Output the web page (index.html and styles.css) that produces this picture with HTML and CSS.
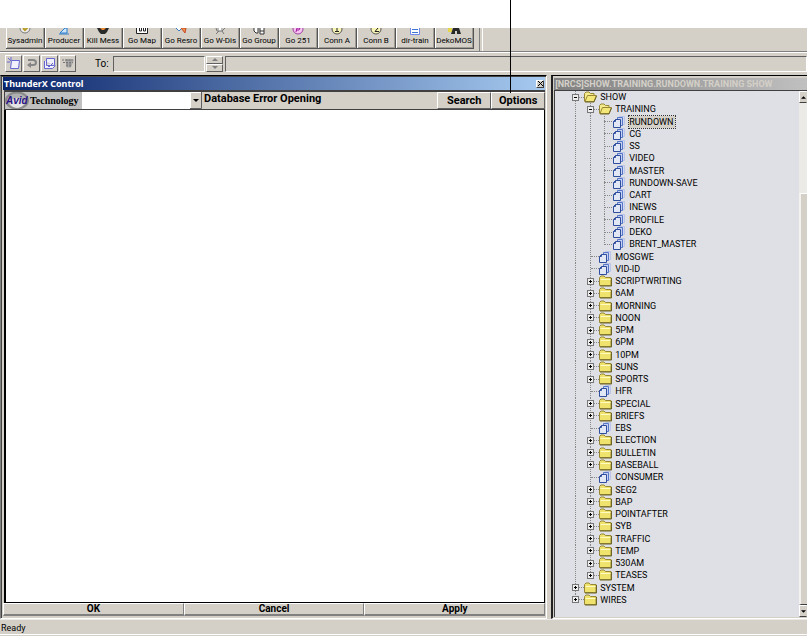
FILE: index.html
```html
<!DOCTYPE html>
<html lang="en">
<head>
<meta charset="utf-8">
<title>ThunderX Control</title>
<link rel="stylesheet" href="styles.css">
</head>
<body>
<svg class="defs" aria-hidden="true">
  <symbol id="folder" viewBox="0 0 13 12">
    <path d="M.5 10.500V2.500L2 1h3l1.500 1.500H12v8z" fill="#efe36e" stroke="#978734"/>
    <path d="M1.500 4.500h10" stroke="#fffbc2"/>
    <path d="M12.500 3v8H1" fill="none" stroke="#6e6428"/>
  </symbol>
  <symbol id="open" viewBox="0 0 13 12">
    <path d="M.5 10.500v-8L2 1h3l1.500 1.500H10v2" fill="#f5eb8c" stroke="#978734"/>
    <path d="M1 10.500l2.500-6h9l-2.500 6z" fill="#f3e77a" stroke="#978734"/>
    <path d="M1 11h9l2.500-6" fill="none" stroke="#6e6428"/>
  </symbol>
  <symbol id="queue" viewBox="0 0 13 12">
    <path d="M6.500 .5h5v8h-5z" fill="#d3daf1" stroke="#bac4e8"/>
    <path d="M4.500 1.500h5v8h-5z" fill="#c5d0f2" stroke="#5676c6"/>
    <path d="M2.500 3.500h5v8h-7v-6z" fill="#e2e7f6" stroke="#2f4e9e"/>
    <path d="M.5 5.500h2v-2" fill="none" stroke="#2f4e9e"/>
  </symbol>
</svg>

<div class="callout"></div>

<div class="app">
  <nav class="macros" aria-label="Macros">
    <button><svg viewBox="0 0 14 7"><circle cx="7" cy="0" r="5" fill="#eee" stroke="#777"/><path d="M5 0l2 2 3-3" fill="none" stroke="#b79b22" stroke-width="2"/></svg>Sysadmin</button>
    <button><svg viewBox="0 0 14 7"><path d="M3 5l5-5h2v5z" fill="#cbe6fb" stroke="#2b7dcc"/><path d="M2 6h10" stroke="#2b7dcc"/></svg>Producer</button>
    <button><svg viewBox="0 0 14 7"><path d="M1 0h12l-2 4-2 2H5L3 4z" fill="#292929"/><path d="M4 0h6L8 2H6z" fill="#e68a35"/></svg>Kill Mess</button>
    <button><svg viewBox="0 0 14 7"><path d="M1.500 0v5.500h11V0M4.500 0v3h2V0m2 0v3h2V0" fill="#fff" stroke="#222"/></svg>Go Map</button>
    <button><svg viewBox="0 0 14 7"><path d="M2 0l3 3 3-3" fill="#fff" stroke="#3a79c4"/><path d="M7 0l4 5 1-5z" fill="#ef9042" stroke="#c54a2b"/></svg>Go Resro</button>
    <button><svg viewBox="0 0 14 7"><path d="M3 0l1 3h5l3-3M6 3L3 6m6-3l2 3" fill="none" stroke="#777"/><circle cx="7" cy="1" r="2" fill="#fff" stroke="#999"/></svg>Go W-Dis</button>
    <button><svg viewBox="0 0 14 7"><path d="M2 0v3l2 2h2V0m2 0v6h4V0M8 3h4" fill="#fff" stroke="#333"/></svg>Go Group</button>
    <button><svg viewBox="0 0 14 7"><circle cx="7" cy="1" r="5" fill="#f7c3f1" stroke="#a044a0"/><path d="M5 4l1-4h3L8 2H5" fill="none" stroke="#a01ca0"/></svg>Go 251</button>
    <button><svg viewBox="0 0 14 7"><circle cx="7" cy="1" r="5" fill="#f8f5b5" stroke="#555"/><path d="M7 0v3M5 3.500h4" stroke="#222"/></svg>Conn A</button>
    <button><svg viewBox="0 0 14 7"><circle cx="7" cy="1" r="5" fill="#f8f5b5" stroke="#555"/><path d="M9 0L6 3.500h4" fill="none" stroke="#222"/></svg>Conn B</button>
    <button><svg viewBox="0 0 14 7"><path d="M2.500 0v6.500h9V0" fill="#fff" stroke="#7188e8"/><path d="M4 1.500h6M4 4.500h6" stroke="#3e75d4"/></svg>dir-train</button>
    <button><svg viewBox="0 0 14 7"><path d="M1 0h4v4H1z" fill="#e5d749"/><path d="M4 6l2-6h6l2 6h-4V3H8v3z" fill="#282828"/></svg>DekoMOS</button>
  </nav>

  <form class="messages">
    <div class="tools">
      <button type="button" aria-label="New message"><svg viewBox="0 0 14 13"><path d="M4.500 3.500h8l-1 8h-8zM1 1l3 3M4 0v3M0 5h3" fill="#f0f0ff" stroke="#6667cf"/></svg></button>
      <button type="button" aria-label="Reply"><svg viewBox="0 0 14 13"><path d="M3 3h5q3 0 3 2.500T8 8H5" fill="none" stroke="#858585" stroke-width="2"/><path d="M6 5v6L2 8z" fill="#858585"/></svg></button>
      <button type="button" aria-label="Forward"><svg viewBox="0 0 14 13"><path d="M3.500 1.500h8v7h-8zM1.500 4v7.500h8l3-3M4 8l2 2 4-4" fill="#f0f0ff" stroke="#6667cf"/></svg></button>
      <button type="button" aria-label="Send"><svg viewBox="0 0 14 13"><path d="M4 2.500h9L10 10.500H6z" fill="#aaa"/><path d="M1 3h12M2 5.500h10M5 8h6M6 2v8m3-8v8" stroke="#777" stroke-dasharray="2 1"/></svg></button>
    </div>
    <label for="to">To:</label>
    <input id="to" type="text">
    <div class="spin">
      <button type="button" aria-label="Previous"><svg viewBox="0 0 6 3"><path d="M0 3l3-3 3 3z" fill="#808080"/></svg></button>
      <button type="button" aria-label="Next"><svg viewBox="0 0 6 3"><path d="M0 0l3 3 3-3z" fill="#808080"/></svg></button>
    </div>
    <input class="body" type="text" aria-label="Message">
  </form>

  <main>
    <section class="control">
      <header>
        <h1>ThunderX Control</h1>
        <button aria-label="Close"><svg viewBox="0 0 5 5"><path d="M0 0l5 5M5 0L0 5" stroke="#000"/></svg></button>
      </header>
      <div class="search">
        <div class="brand">
          <svg viewBox="0 0 24 17"><ellipse cx="12" cy="8.500" rx="11" ry="8" fill="#b0b0b0" stroke="#8a8a8a" stroke-width="2"/><ellipse cx="12" cy="11" rx="7" ry="5" fill="#e4e4e4"/></svg>
          <em>Avid</em>
          <strong>Technology</strong>
        </div>
        <div class="combo">
          <select aria-label="Database"><option></option></select>
          <svg viewBox="0 0 12 17"><path d="M.5 16V.5H11" fill="none" stroke="#fff"/><path d="M0 16.500h11.500V0" fill="none" stroke="#606060"/><path d="M3 7h6l-3 3z"/></svg>
        </div>
        <output>Database Error Opening</output>
        <button>Search</button>
        <button>Options</button>
      </div>
      <div class="results"></div>
      <footer><button>OK</button><button>Cancel</button><button>Apply</button></footer>
    </section>

    <section class="directory">
      <h2>[NRCS]SHOW.TRAINING.RUNDOWN.TRAINING SHOW</h2>
      <div class="pane">
        <ul class="tree">
          <li class="top"><b class="minus"></b><svg><use href="#open"/></svg>SHOW</li>
          <li class="sub"><b class="minus"></b><svg><use href="#open"/></svg>TRAINING</li>
          <li class="leaf"><b></b><svg><use href="#queue"/></svg><mark>RUNDOWN</mark></li>
          <li class="leaf"><b></b><svg><use href="#queue"/></svg>CG</li>
          <li class="leaf"><b></b><svg><use href="#queue"/></svg>SS</li>
          <li class="leaf"><b></b><svg><use href="#queue"/></svg>VIDEO</li>
          <li class="leaf"><b></b><svg><use href="#queue"/></svg>MASTER</li>
          <li class="leaf"><b></b><svg><use href="#queue"/></svg>RUNDOWN-SAVE</li>
          <li class="leaf"><b></b><svg><use href="#queue"/></svg>CART</li>
          <li class="leaf"><b></b><svg><use href="#queue"/></svg>INEWS</li>
          <li class="leaf"><b></b><svg><use href="#queue"/></svg>PROFILE</li>
          <li class="leaf"><b></b><svg><use href="#queue"/></svg>DEKO</li>
          <li class="leaf end"><b></b><svg><use href="#queue"/></svg>BRENT_MASTER</li>
          <li class="sub"><b></b><svg><use href="#queue"/></svg>MOSGWE</li>
          <li class="sub"><b></b><svg><use href="#queue"/></svg>VID-ID</li>
          <li class="sub"><b class="plus"></b><svg><use href="#folder"/></svg>SCRIPTWRITING</li>
          <li class="sub"><b class="plus"></b><svg><use href="#folder"/></svg>6AM</li>
          <li class="sub"><b class="plus"></b><svg><use href="#folder"/></svg>MORNING</li>
          <li class="sub"><b class="plus"></b><svg><use href="#folder"/></svg>NOON</li>
          <li class="sub"><b class="plus"></b><svg><use href="#folder"/></svg>5PM</li>
          <li class="sub"><b class="plus"></b><svg><use href="#folder"/></svg>6PM</li>
          <li class="sub"><b class="plus"></b><svg><use href="#folder"/></svg>10PM</li>
          <li class="sub"><b class="plus"></b><svg><use href="#folder"/></svg>SUNS</li>
          <li class="sub"><b class="plus"></b><svg><use href="#folder"/></svg>SPORTS</li>
          <li class="sub"><b></b><svg><use href="#queue"/></svg>HFR</li>
          <li class="sub"><b class="plus"></b><svg><use href="#folder"/></svg>SPECIAL</li>
          <li class="sub"><b class="plus"></b><svg><use href="#folder"/></svg>BRIEFS</li>
          <li class="sub"><b></b><svg><use href="#queue"/></svg>EBS</li>
          <li class="sub"><b class="plus"></b><svg><use href="#folder"/></svg>ELECTION</li>
          <li class="sub"><b class="plus"></b><svg><use href="#folder"/></svg>BULLETIN</li>
          <li class="sub"><b class="plus"></b><svg><use href="#folder"/></svg>BASEBALL</li>
          <li class="sub"><b></b><svg><use href="#queue"/></svg>CONSUMER</li>
          <li class="sub"><b class="plus"></b><svg><use href="#folder"/></svg>SEG2</li>
          <li class="sub"><b class="plus"></b><svg><use href="#folder"/></svg>BAP</li>
          <li class="sub"><b class="plus"></b><svg><use href="#folder"/></svg>POINTAFTER</li>
          <li class="sub"><b class="plus"></b><svg><use href="#folder"/></svg>SYB</li>
          <li class="sub"><b class="plus"></b><svg><use href="#folder"/></svg>TRAFFIC</li>
          <li class="sub"><b class="plus"></b><svg><use href="#folder"/></svg>TEMP</li>
          <li class="sub"><b class="plus"></b><svg><use href="#folder"/></svg>530AM</li>
          <li class="sub end"><b class="plus"></b><svg><use href="#folder"/></svg>TEASES</li>
          <li class="top"><b class="plus"></b><svg><use href="#folder"/></svg>SYSTEM</li>
          <li class="top end"><b class="plus"></b><svg><use href="#folder"/></svg>WIRES</li>
        </ul>
        <div class="scroll">
          <button aria-label="Scroll up"><svg viewBox="0 0 6 3"><path d="M0 3l3-3 3 3z"/></svg></button>
          <div class="track"></div>
          <div class="thumb"></div>
          <button aria-label="Scroll down"><svg viewBox="0 0 6 3"><path d="M0 0l3 3 3-3z"/></svg></button>
        </div>
      </div>
    </section>
  </main>

  <div class="status">Ready</div>
</div>
</body>
</html>
```

FILE: styles.css
```css
* { box-sizing: border-box; }

body {
  margin: 0;
  height: 100vh;
  background: #fff;
  color: #000;
  font-family: Roboto, "Liberation Sans", sans-serif;
  font-size: 8px;
}

button, input, select {
  margin: 0;
  padding: 0;
  border: 0;
  border-radius: 0;
  color: inherit;
  font: inherit;
  background: #d4d0c8;
}

svg { display: block; flex: none; }
.defs { position: absolute; width: 0; height: 0; }

.callout {
  position: absolute;
  top: 0;
  left: 510px;
  width: 1px;
  height: 93px;
  background: #000;
}

.app {
  display: flex;
  flex-direction: column;
  height: 100%;
  padding: 28px 1px 1px 0;
}

/* Macro buttons */
.macros {
  display: flex;
  flex: none;
  height: 24px;
  padding: 0 0 3px 6px;
  background: #d4d0c8;
  border-bottom: 1px solid #808080;
}
.macros::after {
  content: "";
  width: 2px;
  height: 23px;
  margin-left: 5px;
  border-left: 1px solid #808080;
  border-right: 1px solid #fff;
}
.macros button {
  display: flex;
  flex-direction: column;
  align-items: center;
  justify-content: flex-start;
  gap: 1px;
  width: 39px;
  height: 21px;
  border: solid #555;
  border-width: 0 1px 1px 0;
  box-shadow: inset 1px 0 #fff, inset -1px -1px #a09c94;
  font-size: 8px;
  line-height: 10px;
  white-space: nowrap;
}
.macros svg { width: 14px; height: 7px; }

/* Message bar */
.messages {
  display: flex;
  flex: none;
  align-items: center;
  height: 23px;
  padding: 1px 0 2px 5px;
  background: #d4d0c8;
  border-top: 1px solid #fff;
}
.tools { display: flex; gap: 1px; }
.tools button {
  display: grid;
  place-items: center;
  width: 17px;
  height: 17px;
  border: 1px solid;
  border-color: #fff #606060 #606060 #fff;
}
.tools svg { width: 14px; height: 13px; }
.messages label { width: 37px; padding-left: 19px; font-size: 10px; }
.messages input {
  width: 92px;
  height: 16px;
  border: 1px solid;
  border-color: #606060 #fff #fff #606060;
}
.messages .body { flex: 1; }
.spin { display: flex; flex-direction: column; margin: 0 2px 0 1px; }
.spin button {
  display: grid;
  place-items: center;
  width: 17px;
  height: 8px;
  border: 1px solid;
  border-color: #fff #606060 #606060 #fff;
}
.spin svg { width: 6px; height: 3px; }

main {
  display: flex;
  flex: 1;
  min-height: 0;
  gap: 4px;
  background: #d4d0c8;
}

/* Control window */
.control {
  display: flex;
  flex: 548;
  flex-direction: column;
  min-width: 0;
  padding: 1px 1px 2px 1px;
  border: 1px solid;
  border-color: #000 #fff #fff #808080;
  box-shadow: inset 1px 1px #444;
}
.control header {
  display: flex;
  align-items: center;
  justify-content: space-between;
  height: 13px;
  margin-left: 1px;
  padding: 0 1px;
  color: #fff;
  background: linear-gradient(90deg, #0a246a, #a6caf0);
}
h1 { margin: 0; font: bold 9px/12px "Noto Sans", sans-serif; }
.control header button {
  display: grid;
  place-items: center;
  width: 8px;
  height: 8px;
  border: 1px solid;
  border-color: #fff #404040 #404040 #fff;
}
.control header svg { width: 5px; height: 5px; }
.search {
  display: flex;
  height: 20px;
  margin-left: 2px;
  border: solid #404040;
  border-width: 2px 0 1px 1px;
  background: #d4d0c8;
}
.brand { display: flex; align-items: center; width: 77px; background: #c0c0c0; }
.brand svg { width: 24px; height: 17px; }
.brand em {
  position: absolute;
  margin-left: 1px;
  color: #2b1387;
  font: italic bold 10px/12px "Liberation Sans", sans-serif;
}
.brand strong { margin-left: 1px; font: bold 10px/12px "Liberation Serif", serif; }
.combo { display: flex; width: 120px; }
.combo select { appearance: none; flex: 1; min-width: 0; background: #fff; }
.combo svg { width: 12px; height: 17px; background: #d4d0c8; pointer-events: none; }
.search output {
  flex: 1;
  padding-left: 2px;
  font-weight: bold;
  font-size: 11px;
  line-height: 13px;
}
.search button {
  width: 54px;
  border: 1px solid;
  border-color: #fff #606060 #606060 #fff;
  font-weight: bold;
  font-size: 11px;
}
.results {
  flex: 1;
  margin-left: 2px;
  background: #fff;
  border: solid #000;
  border-width: 0 1px 1px 2px;
}
.control footer { display: flex; height: 13px; margin-left: 1px; }
.control footer button {
  flex: 1;
  border: 1px solid;
  border-color: #fff #808080 #808080 #fff;
  border-bottom-width: 2px;
  font-weight: bold;
  font-size: 10px;
  line-height: 10px;
}

/* Directory window */
.directory {
  display: flex;
  flex: 255;
  flex-direction: column;
  min-width: 0;
  padding: 2px 0 1px 1px;
  border: solid;
  border-width: 1px 0 1px 2px;
  border-color: #000 #fff #fff #222;
}
h2 {
  margin: 0;
  height: 12px;
  padding-left: 1px;
  color: #d4d0c8;
  background: linear-gradient(90deg, #808080, #c0c0c0);
  font-weight: bold;
  font-size: 9px;
  line-height: 12px;
  white-space: nowrap;
}
.pane { display: flex; flex: 1; min-height: 0; border-top: 1px solid #404040; border-left: 1px solid #404040; }
.tree {
  --dots: repeating-linear-gradient(#888 0 1px, transparent 1px 2px);
  display: grid;
  flex: 1;
  grid-auto-rows: minmax(0, 1fr);
  margin: 0;
  padding: 0 0 11px;
  list-style: none;
  background: #dfe0e5;
  font-size: 9px;
  line-height: 12px;
}
.tree li {
  display: flex;
  align-items: center;
  background-repeat: no-repeat;
  background-image: var(--dots), var(--dots), var(--dots);
  background-size: 1px 100%, 1px 0, 1px 0;
  background-position: 20px 0, 35px 0, 49px 0;
  white-space: nowrap;
}
.tree .top { padding-left: 17px; }
.tree .sub { padding-left: 32px; background-size: 1px 100%, 1px 100%, 1px 0; }
.tree .leaf { padding-left: 49px; background-size: 1px 100%, 1px 100%, 1px 100%; }
.tree .leaf.end { background-size: 1px 100%, 1px 100%, 1px 50%; }
.tree .sub.end { background-size: 1px 100%, 1px 50%, 1px 0; }
.tree .top.end { background-size: 1px 50%, 1px 0, 1px 0; }
.tree svg { width: 13px; height: 12px; margin-right: 3px; }
.tree b { flex: none; width: 7px; height: 7px; margin-right: 5px; }
.tree b::after {
  content: "";
  display: block;
  width: 5px;
  margin: 2px 0 0 6px;
  border-top: 1px dotted #888;
}
.tree .sub b:not([class])::after { width: 8px; margin: 3px 0 0 4px; }
.tree .leaf b { width: 9px; margin-right: 0; }
.tree .leaf b::after { width: 8px; margin: 3px 0 0; }
.tree .minus, .tree .plus {
  border: 1px solid #777;
  background: linear-gradient(#000, #000) center / 3px 1px no-repeat #eee;
}
.tree .plus {
  background: linear-gradient(#000, #000) center / 3px 1px no-repeat, linear-gradient(#000, #000) center / 1px 3px no-repeat #eee;
}
.tree mark { padding-right: 1px; color: inherit; background: #d4d0c8; outline: 1px dotted #333; }
.scroll { display: flex; flex-direction: column; width: 8px; background: #eceae6; }
.scroll button {
  display: grid;
  place-items: center;
  height: 12px;
  border: 1px solid;
  border-color: #fff #d4d0c8 #404040 #fff;
}
.scroll svg { width: 5px; height: 3px; }
.track { flex: 90; }
.thumb { flex: 410; background: #d4d0c8; border-left: 2px solid #f4f2ee; border-top: 1px solid #fff; border-bottom: 1px solid #404040; }

.status {
  flex: none;
  height: 17px;
  padding-left: 1px;
  background: #d4d0c8;
  border-top: 1px solid #eceae6;
  border-bottom: 1px solid #d4d0c8;
  box-shadow: inset 0 -1px #fff;
  font-size: 9px;
  line-height: 17px;
}
```
